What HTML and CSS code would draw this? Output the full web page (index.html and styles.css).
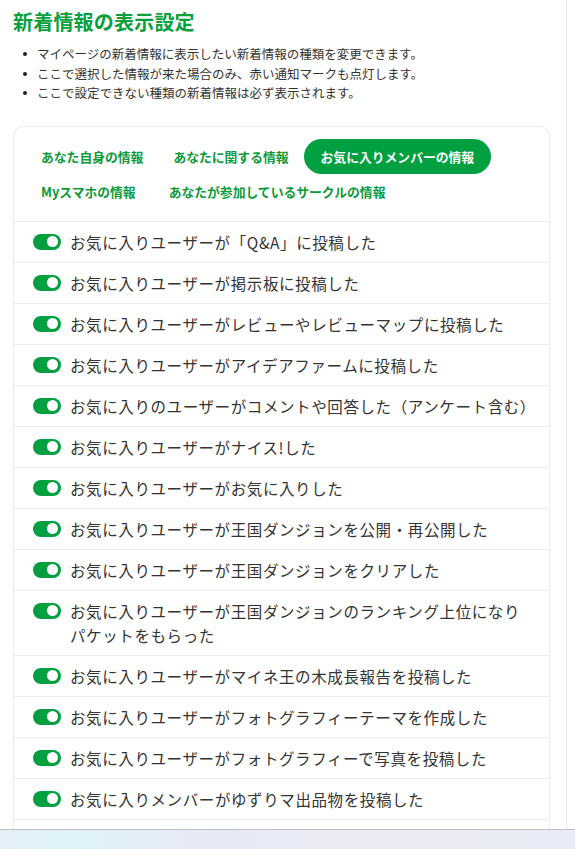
FILE: index.html
```html
<!DOCTYPE html>
<html lang="ja">
<head>
<meta charset="utf-8">
<title>新着情報の表示設定</title>
<link rel="stylesheet" href="styles.css">
</head>
<body>
<div class="page">
  <main class="main">
    <h1 class="title">新着情報の表示設定</h1>
    <ul class="notes">
      <li>マイページの新着情報に表示したい新着情報の種類を変更できます。</li>
      <li>ここで選択した情報が来た場合のみ、赤い通知マークも点灯します。</li>
      <li>ここで設定できない種類の新着情報は必ず表示されます。</li>
    </ul>
    <section class="card">
      <nav class="tabs">
        <span class="tab">あなた自身の情報</span>
        <span class="tab">あなたに関する情報</span>
        <span class="tab active">お気に入りメンバーの情報</span>
        <span class="tab">Myスマホの情報</span>
        <span class="tab">あなたが参加しているサークルの情報</span>
      </nav>
      <ul class="settings">
        <li class="row"><span class="toggle"></span><span class="label">お気に入りユーザーが「Q&amp;A」に投稿した</span></li>
        <li class="row"><span class="toggle"></span><span class="label">お気に入りユーザーが掲示板に投稿した</span></li>
        <li class="row"><span class="toggle"></span><span class="label">お気に入りユーザーがレビューやレビューマップに投稿した</span></li>
        <li class="row"><span class="toggle"></span><span class="label">お気に入りユーザーがアイデアファームに投稿した</span></li>
        <li class="row"><span class="toggle"></span><span class="label">お気に入りのユーザーがコメントや回答した（アンケート含む）</span></li>
        <li class="row"><span class="toggle"></span><span class="label">お気に入りユーザーがナイス!した</span></li>
        <li class="row"><span class="toggle"></span><span class="label">お気に入りユーザーがお気に入りした</span></li>
        <li class="row"><span class="toggle"></span><span class="label">お気に入りユーザーが王国ダンジョンを公開・再公開した</span></li>
        <li class="row"><span class="toggle"></span><span class="label">お気に入りユーザーが王国ダンジョンをクリアした</span></li>
        <li class="row"><span class="toggle"></span><span class="label">お気に入りユーザーが王国ダンジョンのランキング上位になり<br>パケットをもらった</span></li>
        <li class="row"><span class="toggle"></span><span class="label">お気に入りユーザーがマイネ王の木成長報告を投稿した</span></li>
        <li class="row"><span class="toggle"></span><span class="label">お気に入りユーザーがフォトグラフィーテーマを作成した</span></li>
        <li class="row"><span class="toggle"></span><span class="label">お気に入りユーザーがフォトグラフィーで写真を投稿した</span></li>
        <li class="row"><span class="toggle"></span><span class="label">お気に入りメンバーがゆずりマ出品物を投稿した</span></li>
      </ul>
    </section>
  </main>
</div>
<div class="taskbar"></div>
</body>
</html>
```

FILE: styles.css
```css
* { box-sizing: border-box; }

html, body {
  margin: 0;
  padding: 0;
  background: #ffffff;
}

body {
  font-family: "Noto Sans CJK JP", "Noto Sans", sans-serif;
  color: #333333;
}

.page {
  width: 567px;
  border-right: 1px solid #e9e9e9;
  min-height: 100vh;
}

.main {
  padding: 8px 16px 0 13px;
}

.title {
  margin: 0;
  font-size: 20px;
  line-height: 28px;
  font-weight: 700;
  color: #06a13d;
  letter-spacing: 0.2px;
}

.notes {
  list-style: none;
  margin: 8px 0 0 0;
  padding: 0 0 0 24px;
  font-size: 12.5px;
  line-height: 19.5px;
  color: #333;
}

.notes li {
  position: relative;
}

.notes li::before {
  content: "";
  position: absolute;
  left: -14px;
  top: 8px;
  width: 4px;
  height: 4px;
  border-radius: 50%;
  background: #222;
}

.card {
  margin-top: 23px;
  border: 1px solid #ebebeb;
  border-radius: 10px;
  padding-bottom: 20px;
}

.tabs {
  display: flex;
  flex-wrap: wrap;
  padding: 12px 12px 12px 12px;
  border-bottom: 1px solid #ececec;
}

.tab {
  height: 35px;
  line-height: 35px;
  padding: 0 15px;
  font-size: 12.8px;
  font-weight: 700;
  color: #0b9a3a;
  border-radius: 18px;
  white-space: nowrap;
}

.tab.active {
  padding: 0 17px;
  background: #00a040;
  color: #ffffff;
}

.tab:nth-child(4) {
  margin-right: 3px;
}

.settings {
  list-style: none;
  margin: 0;
  padding: 0;
}

.row {
  display: flex;
  align-items: flex-start;
  gap: 9px;
  padding: 8px 0 8px 19px;
  border-bottom: 1px solid #ececec;
}

.toggle {
  flex: none;
  position: relative;
  width: 28px;
  height: 16px;
  margin-top: 4px;
  border-radius: 8px;
  background: #00a040;
}

.toggle::after {
  content: "";
  position: absolute;
  right: 3px;
  top: 2.5px;
  width: 11px;
  height: 11px;
  border-radius: 50%;
  background: #ffffff;
}

.label {
  font-size: 15.5px;
  line-height: 24px;
  letter-spacing: 0.6px;
  color: #333333;
}

.taskbar {
  position: fixed;
  left: 0;
  right: 0;
  bottom: 0;
  height: 20px;
  border-top: 1px solid #bdbdbd;
  background: linear-gradient(90deg, #e4f1f7 0%, #dff3f9 12%, #e6eaf6 35%, #ebebf4 65%, #e9ecf6 100%);
}
```
